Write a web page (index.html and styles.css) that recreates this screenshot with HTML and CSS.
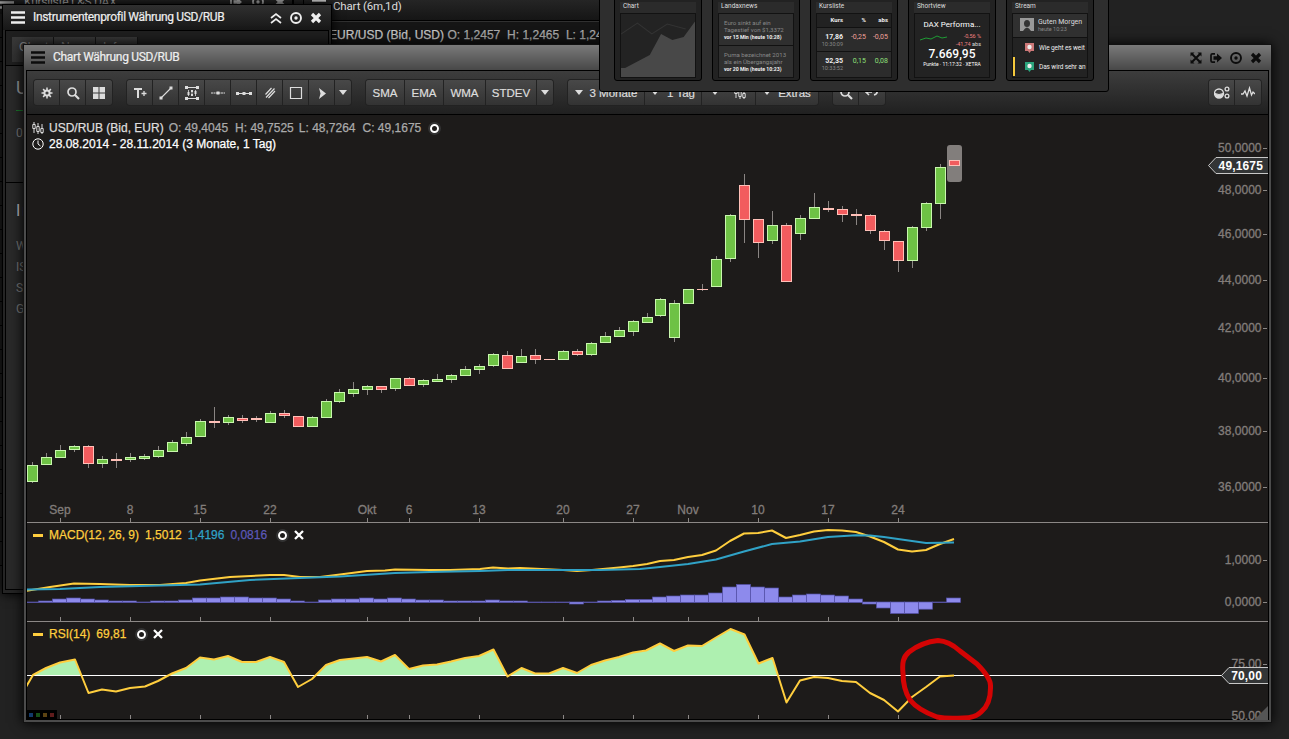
FILE: index.html
```html
<!DOCTYPE html>
<html lang="de">
<head>
    <meta charset="UTF-8">
    <title>Chart Währung USD/RUB</title>
    <link rel="stylesheet" href="styles.css">
</head>
<body>
    <!-- Shared icons -->
    <svg class="sprite">
        <symbol id="menu" viewBox="0 0 14 13"><path d="M0 1.5h14M0 6.5h14M0 11.5h14" stroke="currentColor" stroke-width="2.4"/></symbol>
        <symbol id="close" viewBox="0 0 12 12"><path d="M2 2l8 8M10 2l-8 8" stroke="currentColor" stroke-width="3.2"/></symbol>
        <symbol id="remove" viewBox="0 0 12 12"><path d="M2 2l8 8M10 2l-8 8" stroke="currentColor" stroke-width="2.3"/></symbol>
        <symbol id="target" viewBox="0 0 12 12"><circle cx="6" cy="6" r="5" fill="none" stroke="currentColor" stroke-width="1.9"/><circle cx="6" cy="6" r="1.7" fill="currentColor"/></symbol>
        <symbol id="collapse" viewBox="0 0 12 12"><path d="M1 6l5-4 5 4M1 11l5-4 5 4" fill="none" stroke="currentColor" stroke-width="1.7"/></symbol>
        <symbol id="expand" viewBox="0 0 12 12"><path d="M2 2l8 8M10 2l-8 8" stroke="currentColor" stroke-width="2"/><path d="M.5 .5h4l-4 4zM11.5 .5h-4l4 4zM.5 11.5h4l-4-4zM11.5 11.5h-4l4-4z" fill="currentColor"/></symbol>
        <symbol id="export" viewBox="0 0 12 12"><path d="M5 1.8H2.5Q1 1.8 1 3.3v5.4Q1 10.2 2.5 10.2H5" fill="none" stroke="currentColor" stroke-width="1.7"/><path d="M3.5 4.3H7V1.5L12 6l-5 4.5V7.7H3.5z" fill="currentColor"/></symbol>
        <symbol id="caret" viewBox="0 0 8 5"><path d="M0 0h8L4 5z" fill="currentColor"/></symbol>
        <symbol id="search" viewBox="0 0 14 14"><circle cx="6" cy="6" r="4" fill="none" stroke="currentColor" stroke-width="1.7"/><path d="M9 9l4 4" stroke="currentColor" stroke-width="2.2"/></symbol>
        <symbol id="candles" viewBox="0 0 12 12"><path d="M2 0v2M2 7v4M6 1v3M6 10v2M10 2v4M10 11v1M.8 2.5h2.4v4H.8zM4.8 4.5h2.4v5H4.8zM8.8 6.5h2.4v4H8.8z" fill="none" stroke="currentColor"/></symbol>
    </svg>

    <!-- Windows in the background -->
    <section class="window list-window">
        <div class="back-title"><svg class="i-menu"><use href="#menu"/></svg><span>Kursliste L&amp;S DAX</span><svg class="i-12 push"><use href="#export"/></svg><svg class="i-12"><use href="#target"/></svg><svg class="i-12"><use href="#close"/></svg></div>
    </section>
    <section class="window eur-window">
        <div class="back-title"><svg class="i-menu"><use href="#menu"/></svg><span>Chart (6m,1d)</span></div>
        <div class="quote"><b>EUR/USD (Bid, USD)</b> O: 1,2457 &nbsp;H: 1,2465 &nbsp;L: 1,2442</div>
    </section>

    <section class="window profile-window">
        <div class="titlebar">
            <svg class="i-menu"><use href="#menu"/></svg>
            <span class="title">Instrumentenprofil Währung USD/RUB</span>
            <svg class="i-12"><use href="#collapse"/></svg>
            <svg class="i-12"><use href="#target"/></svg>
            <svg class="i-12"><use href="#close"/></svg>
        </div>
        <div class="profile-body">
            <div class="profile-tabs"><span>Chart</span><span>News</span><span>Info</span></div>
            <div class="profile-head"><h2>USD/RUB</h2><i></i><p>0,00</p></div>
            <div class="profile-info"><h3>Info</h3><p>WKN</p><p>ISIN</p><p>Symbol</p><p>Gattung</p></div>
        </div>
    </section>

    <!-- Chart window -->
    <section class="window chart-window">
        <div class="titlebar">
            <svg class="i-menu"><use href="#menu"/></svg>
            <span class="title">Chart Währung USD/RUB</span>
            <svg class="i-12"><use href="#expand"/></svg>
            <svg class="i-12"><use href="#export"/></svg>
            <svg class="i-12"><use href="#target"/></svg>
            <svg class="i-12"><use href="#close"/></svg>
        </div>
        <div class="chart-inner">
            <div class="toolbar">
                <div class="group tools">
                    <button><svg class="i-14" viewBox="0 0 14 14"><circle cx="7" cy="7" r="2.6" fill="none" stroke="currentColor" stroke-width="2"/><path d="M7 1.5v3M7 9.500v3M1.500 7h3M9.500 7h3M3.100 3.100l2 2M8.900 8.900l2 2M3.100 10.900l2-2M8.900 5.100l2-2" stroke="currentColor" stroke-width="1.500"/></svg></button>
                    <button><svg class="i-14"><use href="#search"/></svg></button>
                    <button><svg class="i-14" viewBox="0 0 14 14"><path d="M1 1h5.500v5.500H1zM7.500 1H13v5.500H7.500zM1 7.500h5.500V13H1zM7.500 7.500H13V13H7.500z" fill="currentColor"/></svg></button>
                </div>
                <div class="group tools">
                    <button><svg class="i-14" viewBox="0 0 14 14"><path d="M1 3h8M5 3v9" stroke="currentColor" stroke-width="2"/><path d="M8.500 7.500h5M11 5v5" stroke="currentColor" stroke-width="1.300"/></svg></button>
                    <button><svg class="i-14" viewBox="0 0 14 14"><path d="M2 12L12 2" stroke="currentColor" stroke-width="1.100"/><path d="M.500 10.500h3v3h-3zM10.500 .500h3v3h-3z" fill="currentColor"/></svg></button>
                    <button><svg class="i-14" viewBox="0 0 14 14"><path d="M1 1.500h12M1 12.500h12" stroke="currentColor"/><path d="M3.500 4v6M7 4v6M10.500 4v6" stroke="currentColor" stroke-width=".8"/><path d="M0 0h3v3H0zM11 0h3v3h-3zM0 11h3v3H0zM11 11h3v3h-3zM2.500 6h2v3h-2zM6 4h2v2H6zM6 8h2v2H6zM9.500 5h2v3h-2z" fill="currentColor"/></svg></button>
                    <button><svg class="i-16" viewBox="0 0 16 14"><path d="M1 7h14" stroke="currentColor" stroke-dasharray="2 .5"/><path d="M6.500 5.500h3v3h-3z" fill="currentColor"/></svg></button>
                    <button><svg class="i-16" viewBox="0 0 16 14"><path d="M1 7.500h14" stroke="currentColor" stroke-width="1.200"/><path d="M0 6h3v3H0zM6.500 6h3v3h-3zM13 6h3v3h-3z" fill="currentColor"/></svg></button>
                    <button><svg class="i-14" viewBox="0 0 14 14"><path d="M2.500 8.500L8.500 2M3 11.500L11.500 2.500M5.500 12L12 5" stroke="currentColor" stroke-width="1.200"/></svg></button>
                    <button><svg class="i-14" viewBox="0 0 14 14"><path d="M1.500 1.500h11v11h-11z" fill="none" stroke="currentColor" stroke-width="1.200"/></svg></button>
                    <button><svg class="i-14" viewBox="0 0 14 14"><path d="M4 2l7 5.500-7 5.500 1.500-5.500z" fill="currentColor"/></svg></button>
                    <button class="drop"><svg class="i-caret"><use href="#caret"/></svg></button>
                </div>
                <div class="group">
                    <button class="sma">SMA</button><button class="ema">EMA</button><button class="wma">WMA</button><button class="stdev">STDEV</button>
                    <button class="drop"><svg class="i-caret"><use href="#caret"/></svg></button>
                </div>
                <div class="group menus">
                    <button class="months"><svg class="i-caret"><use href="#caret"/></svg>3 Monate</button>
                    <button class="days"><svg class="i-caret"><use href="#caret"/></svg>1 Tag</button>
                    <button class="style"><svg class="i-caret"><use href="#caret"/></svg><svg class="i-12"><use href="#candles"/></svg></button>
                    <button class="extras"><svg class="i-caret"><use href="#caret"/></svg>Extras</button>
                </div>
                <div class="group tools">
                    <button><svg class="i-14"><use href="#search"/></svg></button>
                    <button><svg class="i-14" viewBox="0 0 14 14"><path d="M1 6h6M4 3L1 6l3 3M9 9q4-1 3-5" fill="none" stroke="currentColor" stroke-width="1.600"/></svg></button>
                </div>
                <div class="group tools last">
                    <button><svg class="i-16" viewBox="0 0 16 14"><circle cx="5" cy="7.500" r="4.500" fill="none" stroke="currentColor" stroke-width="1.300"/><path d="M1 7.500q4 2 8 0a4 4 0 0 1-8 0z" fill="currentColor" stroke="currentColor"/><circle cx="13" cy="3" r="1.900" fill="none" stroke="currentColor" stroke-width="1.300"/><circle cx="13" cy="10" r="1.900" fill="none" stroke="currentColor" stroke-width="1.300"/></svg></button>
                    <button><svg class="i-14" viewBox="0 0 14 14"><path d="M0 8h2l2-3 2 5 2.500-8 2 7 1.500-3 2 2" fill="none" stroke="currentColor" stroke-width="1.300"/></svg></button>
                </div>
            </div>

            <div class="plot">
                <svg id="chart" width="1241" height="605" viewBox="27 115 1241 605"></svg>
                <div class="legend price-legend">
                    <div class="row"><svg class="i-12"><use href="#candles"/></svg><b>USD/RUB (Bid, EUR)</b><span>O: 49,4045</span><span>H: 49,7525</span><span class="low">L: 48,7264</span><span>C: 49,1675</span><i class="dot"></i></div>
                    <div class="row range"><svg class="i-12" viewBox="0 0 12 12"><circle cx="6" cy="6" r="5.200" fill="none" stroke="currentColor"/><path d="M6 2.500V6l2.500 2" fill="none" stroke="currentColor"/></svg>28.08.2014 - 28.11.2014 (3 Monate, 1 Tag)</div>
                </div>
                <div class="legend macd-legend">
                    <div class="row"><i class="dash"></i><span>MACD(12, 26, 9)</span><span>1,5012</span><span class="signal">1,4196</span><span class="hist">0,0816</span><i class="dot"></i><svg class="i-x"><use href="#remove"/></svg></div>
                </div>
                <div class="legend rsi-legend">
                    <div class="row"><i class="dash"></i><span>RSI(14)</span><span>69,81</span><i class="dot"></i><svg class="i-x"><use href="#remove"/></svg></div>
                </div>
                <div class="swatches"><i></i><i></i><i></i><i></i></div>
            </div>
        </div>
    </section>

    <!-- Widget picker -->
    <section class="picker">
        <div class="card">
            <h4>Chart</h4>
            <div class="card-body">
                <svg width="75" height="63" viewBox="0 0 73 63" preserveAspectRatio="none"><path d="M0 20l16-11 14 11 15-10 18 5" fill="none" stroke="#333"/><path d="M0 54h4l24-13 11-21 11 6 11-3L73 6v57H0z" fill="#484848"/></svg>
            </div>
        </div>
        <div class="card">
            <h4>Landaxnews</h4>
            <div class="card-body">
                <div class="news">Euro sinkt auf ein<br>Tagestief von $1,3372<b>vor 15 Min (heute 10:28)</b></div>
                <div class="news">Puma bezeichnet 2013<br>als ein Übergangsjahr<b>vor 20 Min (heute 10:23)</b></div>
            </div>
        </div>
        <div class="card">
            <h4>Kursliste</h4>
            <div class="card-body">
                <div class="rates head"><b>Kurs</b><b>%</b><b>abs</b></div>
                <div class="rates down"><b>17,86<small>10:30:09</small></b><span>-0,25</span><span>-0,05</span></div>
                <div class="rates up"><b>52,35<small>10:33:52</small></b><span>0,15</span><span>0,08</span></div>
            </div>
        </div>
        <div class="card">
            <h4>Shortview</h4>
            <div class="card-body short">
                <div class="name">DAX Performa...</div>
                <div class="change"><svg width="27" height="8" viewBox="0 0 27 8"><path d="M0 6l6-2 5 1 6-3 5 2 5-1" fill="none" stroke="#1f9c35"/></svg><span>-0,56 %<br>-41,74 <em>abs</em></span></div>
                <div class="big">7.669,95</div>
                <div class="info">Punkte · 11:17:32 · XETRA</div>
            </div>
        </div>
        <div class="card">
            <h4>Stream</h4>
            <div class="card-body stream">
                <div class="post"><svg width="14" height="13" viewBox="0 0 14 13"><path d="M0 0h14v13H0z" fill="#999"/><path d="M7 2q3 0 3 3.500T7 9Q4 9 4 5.500T7 2M3 13q4-7 8 0" fill="#333"/></svg><div>Guten Morgen<small>heute 10:23</small></div></div>
                <div class="reply"><svg width="9" height="10" viewBox="0 0 9 10"><path d="M0 0h9v8H6L4.500 10 3 8H0z" fill="#c77"/><circle cx="4.500" cy="4" r="2.200" fill="#eee"/></svg>Wie geht es weit</div>
                <div class="reply marked"><svg width="9" height="10" viewBox="0 0 9 10"><path d="M0 0h9v8H6L4.500 10 3 8H0z" fill="#2ba37c"/><circle cx="4.500" cy="4" r="2.200" fill="#eee"/></svg>Das wird sehr an</div>
            </div>
        </div>
    </section>

    <script src="chart.js"></script>
</body>
</html>
```
FILE: styles.css
```css
* {
    box-sizing: border-box;
}

body {
    margin: 0;
    width: 1289px;
    height: 739px;
    overflow: hidden;
    position: relative;
    background: #222;
    color: #ddd;
    font-family: "Liberation Sans", Arial, sans-serif;
    font-size: 12px;
}

svg {
    display: block;
    flex: none;
}

h2, h3, h4, p {
    margin: 0;
    font-weight: normal;
}

.sprite {
    display: none;
}

/* Icon sizes */
.i-menu { width: 14px; height: 13px; }
.i-12 { width: 12px; height: 12px; }
.i-14 { width: 14px; height: 14px; }
.i-16 { width: 16px; height: 14px; }
.i-caret { width: 8px; height: 5px; }
.i-x { width: 12px; height: 12px; }

/* Windows on the desktop */
.window {
    position: absolute;
    overflow: hidden;
}

.titlebar {
    display: flex;
    align-items: center;
    gap: 8px;
    height: 25px;
    font-family: Roboto, sans-serif;
    font-size: 12px;
}

.title {
    flex: 1;
    padding-bottom: 2px;
    letter-spacing: -.33px;
    white-space: nowrap;
    -webkit-text-stroke: .2px;
}

.back-title {
    display: flex;
    align-items: center;
    gap: 10px;
    font-family: Roboto, sans-serif;
    background: linear-gradient(#2c2c2c, #151515);
    color: #ddd;
}

.list-window {
    left: 0;
    top: -10px;
    width: 294px;
    height: 576px;
    background: repeating-linear-gradient(#1e1e1e 0 23px, #000 23px 24px);
    border-right: 2px solid #000;
}

.list-window .back-title {
    height: 24px;
    padding: 0 6px 0 0;
    letter-spacing: -.25px;
    color: #aaa;
}

.push {
    margin-left: auto;
}

.eur-window {
    left: 303px;
    top: -9px;
    width: 500px;
    height: 80px;
    background: #151515;
    border-left: 1px solid #000;
}

.eur-window .back-title {
    height: 30px;
    padding-left: 8px;
    gap: 7px;
    font-size: 11.5px;
    letter-spacing: -.15px;
    border-bottom: 1px solid #000;
    box-shadow: 0 1px #303030;
}

.quote {
    padding: 7px 0 0 25px;
    color: #aaa;
    letter-spacing: .02px;
    white-space: nowrap;
    -webkit-text-stroke: .25px;
}

.quote b {
    font-weight: normal;
    color: #c8c8c8;
}

.profile-window {
    left: 2px;
    top: 4px;
    width: 330px;
    height: 590px;
    border: 1px solid #000;
    background: #252525;
    box-shadow: 0 0 10px #000;
}

.profile-window .titlebar {
    padding: 0 9px 0 8px;
    background: linear-gradient(#303030, #171717);
    color: #eee;
}

.profile-body {
    margin: 0 2px;
    height: 560px;
    border: 1px solid #000;
    background: #292929;
}

.profile-tabs {
    display: flex;
    height: 35px;
    padding: 6px;
    background: #1f1f1f;
    border-bottom: 1px solid #000;
}

.profile-tabs span {
    width: 42px;
    height: 25px;
    padding: 3px 7px;
    background: linear-gradient(#393939, #303030);
    border-right: 1px solid #151515;
    color: #888;
}

.profile-head {
    height: 117px;
    padding: 11px 0 0 10px;
    border-bottom: 1px solid #000;
    font-family: Roboto, sans-serif;
    color: #777;
}

.profile-head h2 {
    font-size: 18px;
    line-height: 22px;
    color: #999;
}

.profile-head i {
    display: block;
    height: 1px;
    width: 8px;
    margin: 11px 0 15px;
    background: #1a7a2c;
}

.profile-info {
    padding: 17px 0 0 10px;
    font-family: Roboto, sans-serif;
    color: #777;
}

.profile-info h3 {
    font-size: 16px;
    line-height: 22px;
    letter-spacing: 2px;
    margin-bottom: 14px;
    color: #bbb;
}

.profile-info p {
    line-height: 21px;
}

.chart-window {
    left: 23px;
    top: 44px;
    width: 1249px;
    height: 679px;
    padding: 0 2px 2px;
    border: 1px solid #111;
    background: #4b4b4b;
    box-shadow: 0 0 12px #000;
}

.chart-window .titlebar {
    margin: 0 -2px;
    padding: 0 9px 0 7px;
    background: linear-gradient(#7a7a7a, #484848);
    color: #eee;
}

.chart-window .titlebar svg {
    color: #0c0c0c;
}

.chart-inner {
    height: 650px;
    border: 1px solid #000;
    background: #1d1b1a;
}

/* Toolbar */
.toolbar {
    display: flex;
    align-items: center;
    gap: 15px;
    height: 44px;
    padding: 0 7px;
    border-bottom: 1px solid #000;
    background: linear-gradient(#3d3d3d, #202020);
}

.group {
    display: flex;
    height: 25px;
    border-radius: 3px;
    box-shadow: 0 0 0 1px #222;
    overflow: hidden;
}

.group button {
    display: flex;
    align-items: center;
    justify-content: center;
    padding: 0;
    border: 0;
    border-right: 1px solid #222;
    background: linear-gradient(#484848, #333);
    color: #ddd;
    font: 11.5px "Liberation Sans", Arial, sans-serif;
    -webkit-text-stroke: .2px;
}

.group button:last-child {
    border-right: 0;
}

.tools button { width: 26px; }
.group .drop { width: 16px; }
.group .sma { width: 39px; }
.group .ema { width: 39px; }
.group .wma { width: 42px; }
.group .stdev { width: 51px; }
.menus button { gap: 7px; }
.group .months { width: 77px; }
.group .days { width: 57px; gap: 8px; }
.group .style { width: 54px; gap: 15px; }
.group .extras { width: 62px; }

.group.last {
    margin-left: auto;
}

/* Plot and its legends */
.plot {
    position: relative;
}

.legend {
    position: absolute;
    left: 6px;
    white-space: nowrap;
    -webkit-text-stroke: .25px;
}

.row {
    display: flex;
    align-items: center;
    gap: 5px;
    height: 16px;
    color: #ddd;
}

.row b {
    font-weight: normal;
}

.price-legend { top: 5px; left: 5px; }
.price-legend span { color: #aaa; margin-right: 2px; }
.price-legend .low { margin-left: -2px; }
.price-legend .dot { margin-left: 2px; }
.price-legend .range { color: #fff; }
.macd-legend { top: 412px; }
.rsi-legend { top: 511px; }

.macd-legend .row,
.rsi-legend .row {
    gap: 6px;
}

.macd-legend span,
.rsi-legend span {
    color: #ffce3e;
}

.row .signal { color: #30a2c6; }
.row .hist { color: #5c58b8; }

.dash {
    width: 10px;
    height: 3px;
    background: #ffce3e;
}

.dot {
    width: 9px;
    height: 9px;
    border: 2.5px solid #fff;
    border-radius: 50%;
    box-shadow: 0 0 0 2px #333;
}

.macd-legend .dot,
.rsi-legend .dot {
    margin: 0 0 0 5px;
}

.i-x {
    color: #fff;
}

.swatches {
    position: absolute;
    left: 0;
    bottom: 0;
    display: flex;
    gap: 3px;
    padding: 3px 3px 3px 2px;
    background: #000;
}

.swatches i { width: 4px; height: 4px; background: #123a6b; }
.swatches i:nth-child(2) { background: #185018; }
.swatches i:nth-child(3) { background: #5c4312; }
.swatches i:nth-child(4) { background: #601c1c; }

/* Drawing colors */
#chart text { fill: #827d7a; font-size: 12px; stroke: #827d7a; stroke-width: .3px; }
#chart .tag { fill: #fff; font-weight: bold; stroke: none; letter-spacing: .15px; }
.wick { stroke: #8a8583; }
.candle-up { fill: #6ec245; stroke: #c9f7ae; }
.candle-down { fill: #f25c5e; stroke: #ffc0b8; }
.separator { stroke: #8c8886; }
.tick { stroke: #8c8886; }
.bar { fill: #8d8aec; stroke: #5451a8; stroke-width: .7; }
.line { fill: none; stroke-width: 2; stroke-linejoin: round; }
.macd, .rsi { stroke: #ffce3e; }
.signal-line { stroke: #30a2c6; }
.rsi-area { fill: #aef0b0; }
.level { stroke: #fff; }
.tag-shape { fill: #333536; stroke: #c8c8c8; }
.marker { fill: none; stroke: #d40404; stroke-width: 5; stroke-linejoin: round; }

/* Widget picker */
.picker {
    position: absolute;
    left: 599px;
    top: -10px;
    width: 510px;
    height: 102px;
    padding: 0 14px 10px;
    display: flex;
    gap: 10px;
    background: #2e2e2e;
    border: 1px solid #000;
    border-radius: 3px;
    font-family: Roboto, sans-serif;
    font-size: 7px;
}

.card {
    flex: none;
    width: 88px;
    padding: 10px 5px 5px;
    border: 1px solid #000;
    border-radius: 3px;
    background: #222;
    overflow: hidden;
}

.card h4 {
    height: 11px;
    line-height: 9px;
    padding-left: 3px;
    font-size: 6.5px;
    background: #2b2b2b;
}

.card-body {
    height: 65px;
    border: 1px solid #121212;
    background: #232323;
    overflow: hidden;
}

.news {
    height: 32px;
    padding: 5px 0 0 5px;
    background: #2f2f2f;
    border-bottom: 1px solid #111;
    color: #888;
    font-size: 6.1px;
    line-height: 7px;
    white-space: nowrap;
}

.news b {
    display: block;
    line-height: 9px;
    font-size: 5.2px;
    color: #eee;
}

.rates {
    display: grid;
    grid-template-columns: 26px 23px 22px;
    height: 24px;
    padding-top: 5px;
    text-align: right;
    border-bottom: 1px solid #111;
    background: #2c2c2c;
    color: #f0a09a;
}

.rates b { color: #eee; }
.rates.head { height: 14px; padding-top: 2px; font-size: 6px; background: #222; }
.rates.up { color: #8fe07a; height: 26px; }

small {
    display: block;
    color: #888;
    font-size: 5.5px;
    font-weight: normal;
}

.short {
    text-align: center;
    color: #fff;
}

.name { font-size: 8px; line-height: 10px; padding-top: 6px; }
.change { display: flex; justify-content: space-between; padding: 2px 8px 0 5px; font-size: 5.5px; line-height: 8px; text-align: right; color: #f08080; }
.change svg { margin-top: 2px; }
.change em { font-style: normal; color: #ddd; }
.big { font-size: 12px; line-height: 12px; font-weight: 500; }
.info { font-size: 5px; line-height: 9px; }

.post {
    display: flex;
    gap: 4px;
    height: 24px;
    padding: 4px 7px;
    background: #303030;
    border-bottom: 1px solid #111;
    white-space: nowrap;
}

.reply {
    display: flex;
    align-items: center;
    gap: 5px;
    height: 19px;
    padding-left: 10px;
    border-left: 2px solid transparent;
    white-space: nowrap;
    font-size: 6.5px;
    letter-spacing: -.1px;
    color: #eee;
}

.reply.marked {
    border-left-color: #f5c93c;
}
```
FILE: chart.js
```js
const chart = document.getElementById('chart');

// high, top, bottom, low, direction (1 = up, 0 = down)
const candles = [
    [462,465,482,483,1],[453,457,465,465,1],[445,450,458,458,1],[445,446,450,452,1],[445,446,464,468,0],
    [456,459,464,468,1],[453,459,461,468,0],[453,457,460,462,1],[454,456,459,460,1],[446,450,457,458,1],
    [440,442,452,452,1],[432,437,444,446,1],[419,421,437,437,1],[407,421,423,428,0],[415,417,423,425,1],
    [415,418,421,423,0],[416,418,420,422,0],[411,413,423,423,1],[410,413,416,418,0],[416,416,427,427,0],
    [416,417,427,427,1],[399,401,418,418,1],[389,392,402,403,1],[382,389,394,397,1],[385,386,390,395,1],
    [386,386,390,393,0],[378,378,389,391,1],[377,378,386,386,0],[379,380,385,387,1],[374,379,382,382,1],
    [374,375,380,383,1],[366,369,376,376,1],[364,366,370,374,1],[353,354,366,367,1],[351,355,369,369,0],
    [349,356,363,363,1],[349,355,360,364,0],[359,359,360,360,0],[350,351,360,360,1],[349,351,355,356,0],
    [342,343,355,356,1],[332,336,343,343,1],[327,330,337,337,1],[320,321,332,336,1],[313,317,323,323,1],
    [298,299,316,317,1],[300,303,338,342,1],[289,289,304,304,1],[284,289,290,291,0],[256,259,287,287,1],
    [214,215,259,262,1],[174,185,220,243,0],[219,219,243,258,0],[211,225,241,244,1],[223,225,282,282,0],
    [215,218,234,240,1],[193,207,219,219,1],[201,208,210,212,0],[206,209,215,222,0],[209,214,216,225,0],
    [214,215,231,234,0],[230,231,241,250,0],[241,241,261,272,0],[226,227,261,268,1],[202,203,228,231,1],
    [164,167,204,219,1],[160,160,166,166,0]
];

// y of each histogram bar, the zero line is at 602
const bars = [
    602,601,599,598,599,600,601,601,602,601,601,600,598,598,597,597,598,598,599,601,602,600,599,599,598,599,598,599,
    600,600,601,601,601,600,601,601,602,602,602,603.5,602,601,600.5,599.5,599.5,597,596,595,595,593,587,584.5,587,588,
    597,595,594,595,596,599,603.5,607.5,613,613,608.7,602,598
];

const macd = '26,591 50,587 74,583.5 100,584 130,585 160,585 186,583 200,580.5 230,577 270,575 284,575 300,577 320,577 340,574.5 367,571 385,570.5 395,569.5 430,570 450,570 480,569 493,567.5 508,568.5 520,568 563,570 577,571 592,570 619,567.5 633,566 647,564 660,561 674,560 688,557 702,555 716,550.5 730,541 744,533.5 758,533 772,530.5 786,538 800,535 814,531.5 828,530 842,530.5 856,532 870,536.5 884,542 898,549.5 912,551.5 926,550 940,544 954,539';
const signal = '26,589.5 60,589 100,587 140,586 200,584.5 250,580 300,578 340,576.5 395,573 430,572 480,571 508,570 563,570 600,570 640,569 660,567 688,564 716,559.5 744,551.5 772,544 800,541.5 828,537 856,535.3 870,535.5 884,537 898,539 926,543 954,542.5';
const rsi = '26,687 33,675 46,668 60,662.5 75,659.5 88.5,693 102,689.5 116,691.5 130,688 145,686.5 158,681 172,673.5 186,668 200,657.5 214,659.5 228,656 242,662 256,662 270,657 284,662 298,687 312,679 326,665 340,660 367,657 381,661.5 395,655 409,669 423,665.5 437,664.5 451,661.5 465,658 479,656 493.5,649.5 507.5,676.5 521.5,668 535,673.5 549,673.5 563,668 577,673 591,665 605,660.5 619,657 633,652.5 646,650.5 660,643.5 674,651 688,645.5 702,646 716,637.5 730.5,629 744.5,634.5 758.5,663.5 772.5,658 786.5,702.5 800,680.5 814,677 828,678 842,681 856,682 870,693 884,700 898,711.5 912,697 926,687 940,676.5 954,675.5';

const dates = [[60.5,'Sep'],[130.5,'8'],[200.5,'15'],[270.5,'22'],[367.5,'Okt'],[409.5,'6'],[479.5,'13'],[563.5,'20'],[633.5,'27'],[688.5,'Nov'],[758.5,'10'],[828.5,'17'],[898.5,'24']];
const scale = [[148,'50,0000'],[190,'48,0000'],[234,'46,0000'],[280,'44,0000'],[328,'42,0000'],[378,'40,0000'],[431,'38,0000'],[487,'36,0000'],[560,'1,0000'],[602,'0,0000'],[664,'75.00'],[716,'50.00']];

function centerX(i) {
    return 32.5 + 14 * i - (i > 21 ? 1 : 0) - (i > 44 ? 1 : 0);
}

let out = '';

// Axis labels and panel borders
scale.forEach(([y, label]) => {
    out += `<text x="1261.5" y="${y + 4}" text-anchor="end">${label}</text><path class="tick" d="M1263 ${y + .5}h4"/>`;
});
dates.forEach(([x, label]) => {
    out += `<text x="${x - .5}" y="514" text-anchor="middle">${label}</text>`;
    out += `<path class="tick" d="M${x} 518v4M${x} 617v4M${x} 715v4"/>`;
});
out += '<path class="separator" d="M27 522.5h1241M27 621.5h1241"/>';

// Price
out += '<rect x="947" y="145" width="15" height="37" rx="3" fill="#827e7c"/>';
candles.forEach(([high, top, bottom, low, up], i) => {
    const x = centerX(i);
    const cls = up ? 'candle-up' : 'candle-down';
    out += `<path class="wick" d="M${x} ${high}V${low}"/>`;
    if (bottom - top < 2) {
        out += `<path class="${cls}" d="M${x - 5.5} ${top + .5}h11"/>`;
    } else {
        out += `<rect class="${cls}" x="${x - 5}" y="${top + .5}" width="10" height="${bottom - top - 1}"/>`;
    }
});

// MACD
bars.forEach((y, i) => {
    const x = Math.max(centerX(i) - 8, 27);
    const width = centerX(i) + 6 - x;
    out += `<rect class="bar" x="${x}" y="${Math.min(y, 602)}" width="${width}" height="${Math.abs(602 - y) + .5}"/>`;
});
out += `<polyline class="line macd" points="${macd}"/><polyline class="line signal-line" points="${signal}"/>`;

// RSI, filled above the 70 level
out += '<clipPath id="above"><rect x="27" y="622" width="1241" height="53"/></clipPath>';
out += `<polygon class="rsi-area" clip-path="url(#above)" points="26,720 ${rsi} 954,720"/>`;
out += '<path class="level" d="M27 675.5h1195"/>';
out += `<polyline class="line rsi" points="${rsi}"/>`;

// Value tags
out += '<path class="tag-shape" d="M1268 157.5h-52l-7.5 8 7.5 8h52"/><text class="tag" x="1263" y="170" text-anchor="end">49,1675</text>';
out += '<path class="tag-shape" d="M1268 667.5h-39l-7.5 8 7.5 8h39"/><text class="tag" x="1262" y="680" text-anchor="end">70,00</text>';
out += '<path d="M1254 720l14-14v14z" fill="#555"/>';

// Hand drawn marker
out += '<path class="marker" d="M903 673C902 663 903 657 909 652Q922 642 938 640.5Q949 641 960 651L977 664Q991 678 990.5 686Q991 704 981 712Q975 718 963 718Q947 719 937 717Q918 710 910 700Q903 689 903 673z"/>';

chart.innerHTML = out;
```
